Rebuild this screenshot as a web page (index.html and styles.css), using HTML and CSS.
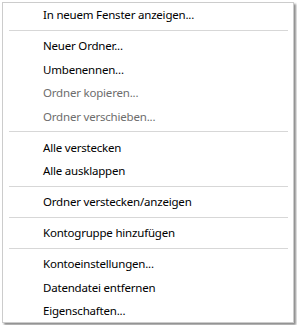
FILE: index.html
```html
<!DOCTYPE html>
<html lang="de">
<head>
    <meta charset="UTF-8">
    <title>Kontextmenü</title>
    <link rel="stylesheet" href="styles.css">
</head>
<body>
    <div class="context-menu">
        <div class="menu-item">In neuem Fenster anzeigen...</div>
        <div class="menu-separator"></div>
        <div class="menu-item">Neuer Ordner...</div>
        <div class="menu-item">Umbenennen...</div>
        <div class="menu-item disabled">Ordner kopieren...</div>
        <div class="menu-item disabled">Ordner verschieben...</div>
        <div class="menu-separator"></div>
        <div class="menu-item">Alle verstecken</div>
        <div class="menu-item">Alle ausklappen</div>
        <div class="menu-separator"></div>
        <div class="menu-item">Ordner verstecken/anzeigen</div>
        <div class="menu-separator"></div>
        <div class="menu-item">Kontogruppe hinzufügen</div>
        <div class="menu-separator"></div>
        <div class="menu-item">Kontoeinstellungen...</div>
        <div class="menu-item">Datendatei entfernen</div>
        <div class="menu-item">Eigenschaften...</div>
    </div>
</body>
</html>
```

FILE: styles.css
```css
body {
    margin: 0;
    padding: 2px;
    background-color: #ffffff;
    font-family: "Noto Sans", "Open Sans", sans-serif;
    font-size: 11.5px;
    letter-spacing: -0.2px;
}

.context-menu {
    box-sizing: border-box;
    width: 292px;
    height: 321px;
    background-color: #ffffff;
    border: 1px solid #cccccc;
    box-shadow: 2px 2px 2px rgba(0, 0, 0, 0.45);
}

.menu-item {
    height: 23.5px;
    line-height: 24px;
    padding-left: 40px;
    color: #000000;
    white-space: nowrap;
}

.menu-item.disabled {
    color: #6d6d6d;
}

.menu-separator {
    height: 1px;
    margin: 3px 5px 3.5px 6px;
    background-color: #d7d7d7;
}
```
